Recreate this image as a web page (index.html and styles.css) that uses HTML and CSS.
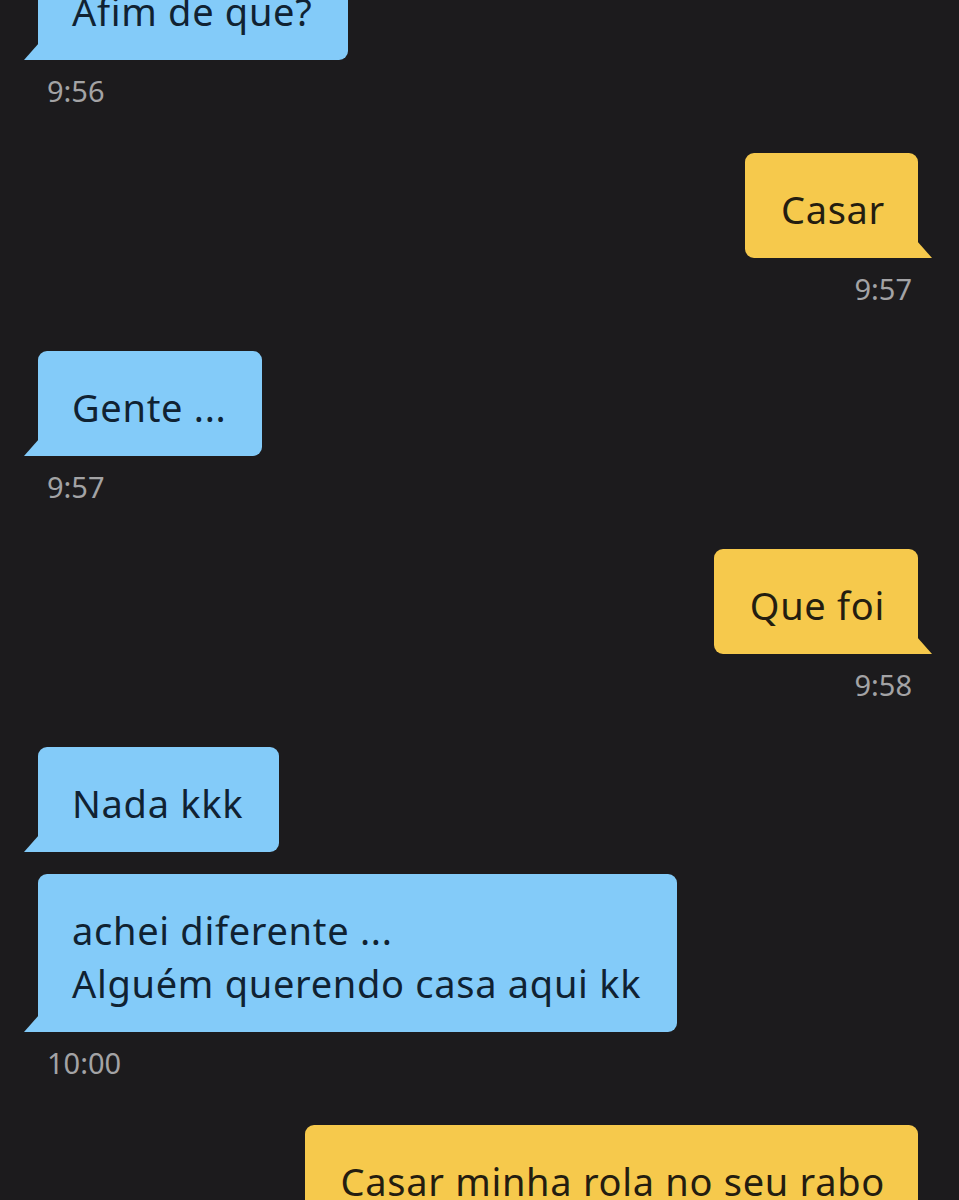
FILE: index.html
```html
<!DOCTYPE html>
<html lang="pt">

<head>
	<meta charset="UTF-8">
	<meta name="viewport" content="width=device-width, initial-scale=1.0">
	<title>Conversa</title>
	<link rel="stylesheet" href="styles.css">
</head>

<body>
	<div class="chat">

		<div class="group group-first them">
			<div class="bubble">Afim de que?</div>
			<div class="time">9:56</div>
		</div>

		<div class="group me">
			<div class="bubble">Casar</div>
			<div class="time">9:57</div>
		</div>

		<div class="group them">
			<div class="bubble">Gente ...</div>
			<div class="time">9:57</div>
		</div>

		<div class="group me">
			<div class="bubble">Que foi</div>
			<div class="time">9:58</div>
		</div>

		<div class="group them">
			<div class="bubble">Nada kkk</div>
			<div class="bubble">achei diferente ...<br>Alguém querendo casa aqui kk</div>
			<div class="time">10:00</div>
		</div>

		<div class="group me">
			<div class="bubble">Casar minha rola no seu rabo</div>
			<div class="time">10:01</div>
		</div>

	</div>
</body>

</html>
```

FILE: styles.css
```css
html,
body {
	margin: 0;
	background-color: #1c1b1d;
}

body {
	font-family: "Noto Sans", "Open Sans", sans-serif;
	overflow: hidden;
	height: 1200px;
}

.chat {
	padding: 0 41px 0 38px;
	display: flex;
	flex-direction: column;
}

.group {
	display: flex;
	flex-direction: column;
	gap: 22px;
	margin-bottom: 47px;
}

.group-first {
	margin-top: -45px;
}

.them {
	align-items: flex-start;
}

.me {
	align-items: flex-end;
}

.bubble {
	position: relative;
	font-size: 38px;
	line-height: 53px;
	letter-spacing: 0.7px;
	padding: 30px 36px 22px 34px;
	border-radius: 9px;
}

.bubble::after {
	content: "";
	position: absolute;
	bottom: 0;
	width: 15px;
	height: 17px;
}

.them .bubble {
	background-color: #83cbf9;
	color: #102232;
	border-bottom-left-radius: 0;
}

.them .bubble::after {
	left: -14px;
	background-color: #83cbf9;
	clip-path: polygon(100% 0, 100% 100%, 0 100%);
}

.me .bubble {
	background-color: #f6c94c;
	color: #241d10;
	padding-left: 36px;
	padding-right: 33px;
	border-bottom-right-radius: 0;
}

.me .bubble::after {
	right: -14px;
	background-color: #f6c94c;
	clip-path: polygon(0 0, 100% 100%, 0 100%);
}

.time {
	font-size: 29px;
	line-height: 30px;
	color: #a3a3a5;
	margin-top: -6px;
}

.them .time {
	padding-left: 9px;
}

.me .time {
	padding-right: 6px;
}
```
